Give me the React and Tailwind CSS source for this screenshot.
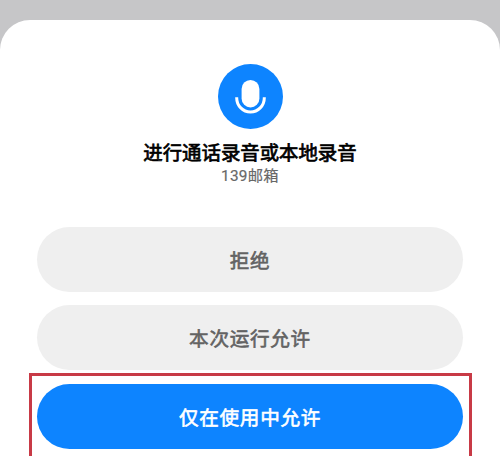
const actions = [
  { label: '拒绝', className: 'mb-[13px] bg-[#efefef] text-[#636363]' },
  { label: '本次运行允许', className: 'mb-[14px] bg-[#efefef] text-[#636363]' },
  { label: '仅在使用中允许', className: 'bg-[#0d84ff] text-white' }
];

function MicIcon() {
  return (
    <svg viewBox="0 0 65 65" className="size-[65px]" fill="none">
      <circle cx="32.5" cy="32.5" r="32.5" fill="#0d84ff" />
      <rect x="23.6" y="16" width="17.8" height="27.4" rx="8.9" fill="#fff" />
      <path d="M18.7 33.2v.8a13.8 14 0 0 0 27.6 0v-.8" stroke="#fff" strokeWidth="3" />
    </svg>
  );
}

function ActionButton({ label, className }) {
  return (
    <button className={`flex h-[65px] w-full shrink-0 items-center justify-center rounded-full pt-[5px] text-[19.6px] leading-none font-normal tracking-[0.7px] [-webkit-text-stroke:0.6px] ${className}`}>
      {label}
    </button>
  );
}

export default function App() {
  return (
    <div className="relative h-[456px] w-[500px] overflow-hidden bg-[#c6c6c8] pt-5 font-[Roboto,'Noto_Sans_CJK_SC',sans-serif]">
      <div className="flex h-[436px] flex-col items-center rounded-t-[30px] bg-white px-[37px] pt-11">
        <MicIcon />
        <h1 className="mt-[11px] text-[19.4px] leading-7 font-normal whitespace-nowrap text-black [-webkit-text-stroke:0.7px]">进行通话录音或本地录音</h1>
        <p className="-mt-[2px] text-[15.3px] leading-5 tracking-[0.3px] text-[#686868] [-webkit-text-stroke:0.2px]">139邮箱</p>
        <div className="mt-[41px] flex w-full flex-col">
          {actions.map((action) => (
            <ActionButton key={action.label} {...action} />
          ))}
        </div>
      </div>

      {/* highlight around the recommended choice */}
      <div className="pointer-events-none absolute top-[373px] left-[29px] h-24 w-[443px] border-[3px] border-[#c83a46]" />
    </div>
  );
}
